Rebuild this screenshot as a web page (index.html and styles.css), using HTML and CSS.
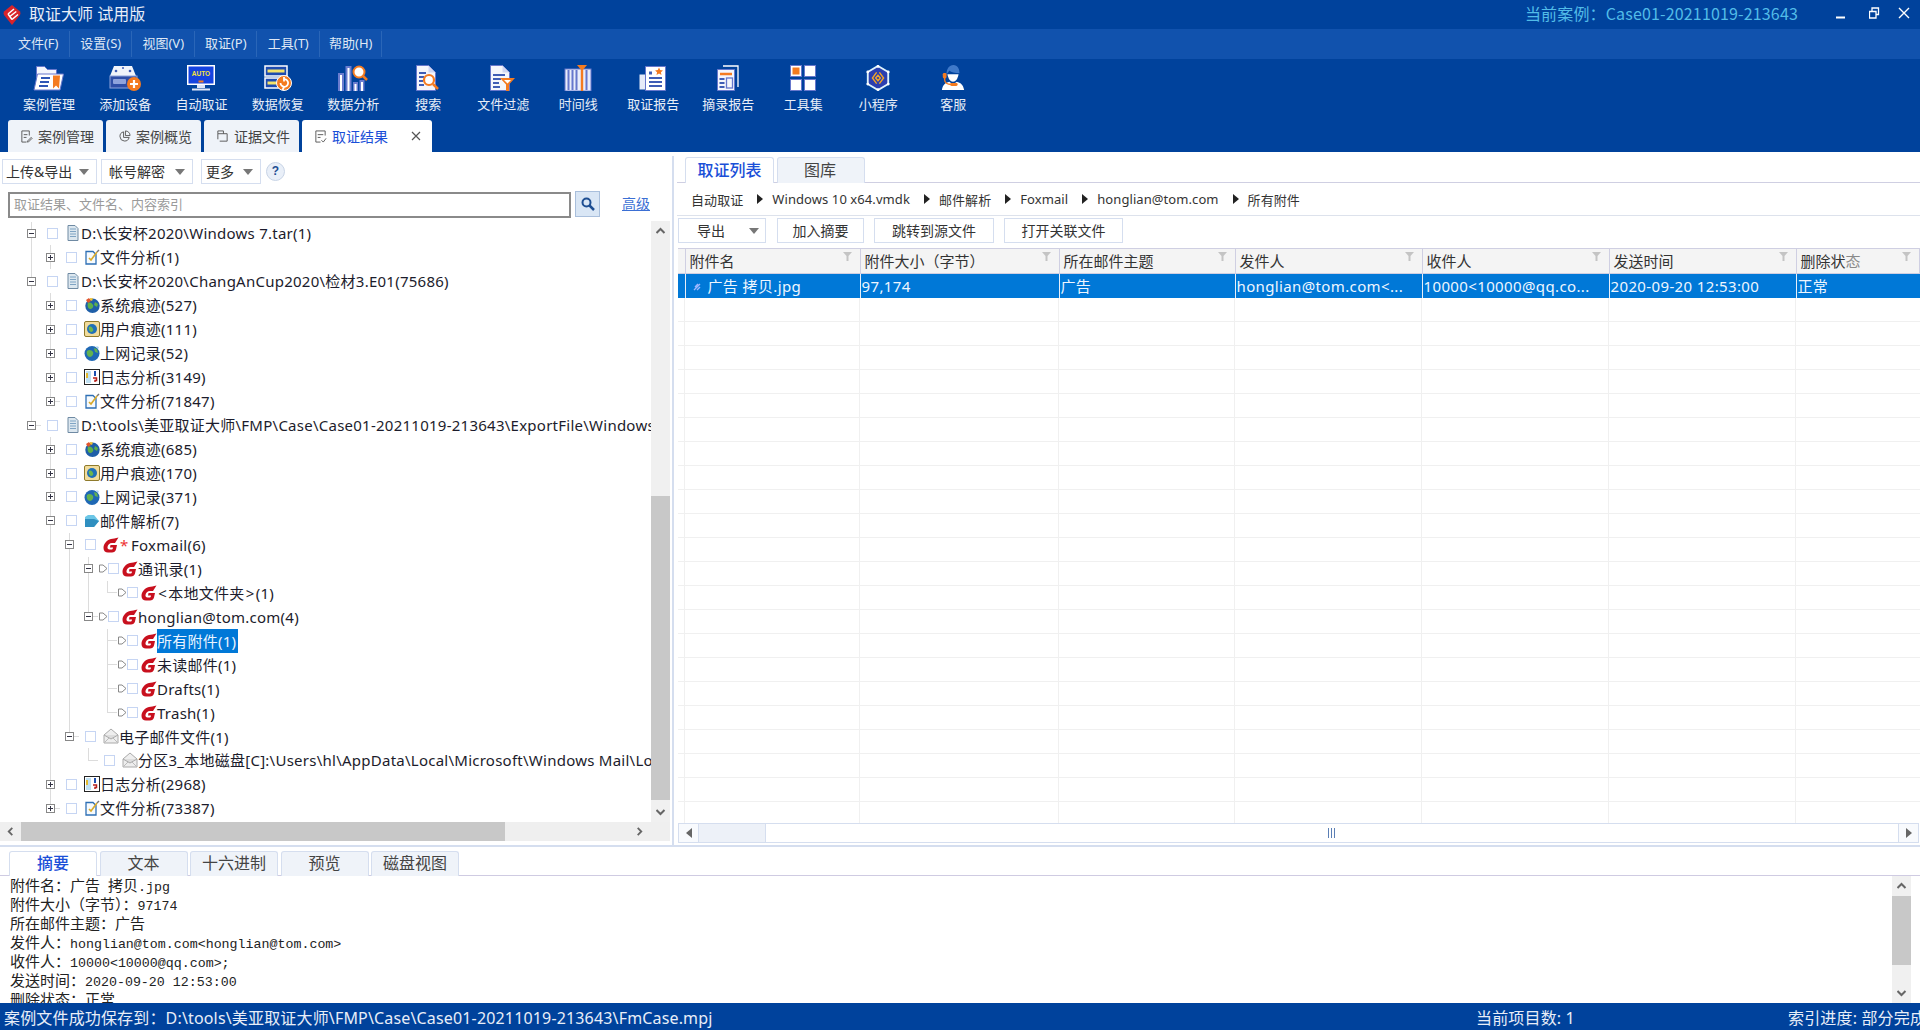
FILE: index.html
```html
<!DOCTYPE html>
<html lang="zh-CN">
<head>
<meta charset="utf-8">
<title>取证大师 试用版</title>
<link rel="stylesheet" href="styles.css">
</head>
<body>
<svg class="defs" aria-hidden="true">
  <symbol id="doc" viewBox="0 0 16 16"><path d="M3 .5h7l3 3v12H3z" fill="#dce7ef" stroke="#6f8aa3"/><path d="M5 4h6M5 6.500h6M5 9h6M5 11.500h6" stroke="#7fa4c4"/></symbol>
  <symbol id="fa" viewBox="0 0 16 16"><path d="M2 2.500h7l3 3v9.500H2z" fill="#f6fafd" stroke="#2d6fb5" stroke-width="1.300"/><path d="M5 9l2 2 6-8" fill="none" stroke="#d8a92a" stroke-width="1.600"/><path d="M13 3l2-2" stroke="#777" stroke-width="1.500"/></symbol>
  <symbol id="sys" viewBox="0 0 16 16"><circle cx="8.500" cy="8.800" r="7.200" fill="#1f5fa8"/><path d="M4 6c2-1 4 0 5 2s-1 4-3 4-3-4-2-6zM11 5l3 2-1 3-3-2z" fill="#5eb04a"/><path d="M2 3l3-2 2 3-3 2z" fill="#e2552b"/><path d="M6 1l3 .500-1 2.500-2-1z" fill="#f2c230"/></symbol>
  <symbol id="usr" viewBox="0 0 16 16"><rect x=".5" y=".5" width="15" height="15" rx="1.500" fill="#f1dc9b" stroke="#8f7a2c"/><circle cx="8" cy="8" r="5" fill="#2070b8"/><path d="M5 6c2-1 3 0 4 2s-1 3-2 3-3-3-2-5z" fill="#6db64d"/></symbol>
  <symbol id="net" viewBox="0 0 16 16"><circle cx="8" cy="8.500" r="7.500" fill="#1f68b4"/><path d="M3 6c2-2 5-1 6 1s-1 5-3 5-4-3-3-6zM10 3l3 1 1 4-3-1z" fill="#63b24f"/><path d="M12 1l3 1-1 2z" fill="#9fd0ef"/></symbol>
  <symbol id="log" viewBox="0 0 16 16"><rect x=".5" y=".5" width="15" height="15" fill="#fff" stroke="#222"/><rect x="2" y="2" width="5" height="12" fill="#bfe0f2"/><path d="M11 2v5" stroke="#1d4fb0" stroke-width="2"/><path d="M3 4v5" stroke="#e3b92f" stroke-width="2"/><path d="M9 9h3.500v2.500H11V13" fill="none" stroke="#b5201c" stroke-width="1.500"/></symbol>
  <symbol id="mail" viewBox="0 0 16 16"><path d="M1 4l3-2h6l5 6-5 6H1z" fill="#6cc6e6"/><path d="M1 6h9l5 2-5 6H1z" fill="#2f8fc0"/></symbol>
  <symbol id="fox" viewBox="0 0 16 16"><path d="M15.500.5C12.500 1.500 10 1.500 8 2 3.500 3 .5 7 .5 11c0 3 2 4.500 4.500 4.500h4c2 0 3.500-1 4-3l1-4.500H7.500L7 10.500h3l-.2 1c-.1.7-.6 1-1.300 1h-2c-1.500 0-2.200-1-2-2.500.3-2 2-4 4.500-4h3z" fill="#c8101e"/></symbol>
  <symbol id="env" viewBox="0 0 16 16"><path d="M1 7l7-6 7 6v8H1z" fill="#eee" stroke="#aaa"/><path d="M1 7l7 4 7-4" fill="#ddd" stroke="#aaa"/><path d="M1 15l5-5M15 15l-5-5" stroke="#bbb"/></symbol>
  <symbol id="tri" viewBox="0 0 9 9"><path d="M.5 1h3.500l4 3.500-4 3.500H.5z" fill="#fff" stroke="#888"/></symbol>
  <symbol id="fun" viewBox="0 0 9 9"><path d="M0 0h9L5.500 4v5h-2V4z" fill="#c4c4c4"/></symbol>
  <symbol id="up" viewBox="0 0 10 10"><path d="M1 7l4-4 4 4" fill="none" stroke="#666" stroke-width="2"/></symbol>
  <symbol id="down" viewBox="0 0 10 10"><path d="M1 3l4 4 4-4" fill="none" stroke="#666" stroke-width="2"/></symbol>
  <symbol id="left" viewBox="0 0 10 10"><path d="M7 1L3 5l4 4" fill="none" stroke="#666" stroke-width="2"/></symbol>
  <symbol id="right" viewBox="0 0 10 10"><path d="M3 1l4 4-4 4" fill="none" stroke="#666" stroke-width="2"/></symbol>
</svg>

<header class="titlebar">
  <svg class="logo" viewBox="0 0 18 20"><path d="M9 0l8 6.500q1 1.500 0 3.500L9 20 1 10Q0 8 1 6.500z" fill="#d8232a"/><path d="M5 9l6-5M6.800 11.500l6.500-5M9 14.500l6-5M5 9l4 5.500" fill="none" stroke="#fff" stroke-width="1.500"/></svg>
  <span class="apptitle">取证大师 试用版</span>
  <span class="casename">当前案例：Case01-20211019-213643</span>
  <svg class="winbtn" viewBox="0 0 33 12"><path d="M0 10.500h9" stroke="#fff" stroke-width="2"/></svg>
  <svg class="winbtn mid" viewBox="0 0 29 12"><path d="M.5 4.500h6.500v6.500H.5zM3 4V1h6.500v6.500H7" fill="none" stroke="#fff" stroke-width="1.300"/></svg>
  <svg class="winbtn last" viewBox="0 0 12 12"><path d="M1 1l10 10M11 1L1 11" stroke="#fff" stroke-width="1.400"/></svg>
</header>

<nav class="menubar">
  <span class="menu">文件(F)</span><span class="menu">设置(S)</span><span class="menu">视图(V)</span><span class="menu">取证(P)</span><span class="menu">工具(T)</span><span class="menu">帮助(H)</span>
</nav>

<section class="toolbar">
  <div class="tool"><svg viewBox="0 0 32 26"><path d="M3.500 13V1.500h8l3 3h9V9" fill="#f4f6fc" stroke="#6677cc"/><path d="M4.500 9h26l-3.500 16H1z" fill="#fff" stroke="#6677cc"/><path d="M8 13h9M7 17h9M6 21h9" stroke="#2f56b5" stroke-width="2"/><path d="M20 10.500h7l-1 13-3-3-3 3z" fill="#f47b20"/></svg><span>案例管理</span></div>
  <div class="tool"><svg viewBox="0 0 32 26"><path d="M5 1h18l4 10H1z" fill="#f1f4fa"/><circle cx="7" cy="6" r="1.300" fill="#3f5db5"/><circle cx="21" cy="6" r="1.300" fill="#3f5db5"/><circle cx="14" cy="3" r="1" fill="#3f5db5"/><rect x="1" y="11" width="27" height="12" fill="#2f4ea6" stroke="#8fa3dc"/><rect x="4" y="14" width="13" height="5" rx="1" fill="#8fa3dc"/><circle cx="25" cy="19" r="7" fill="#f47b20"/><path d="M25 15v8M21 19h8" stroke="#fff" stroke-width="2.200"/></svg><span>添加设备</span></div>
  <div class="tool"><svg viewBox="0 0 28 26"><rect x="0" y="0" width="28" height="20" fill="#fff"/><rect x="1.500" y="1.500" width="25" height="17" fill="#1543e0"/><text x="14" y="11" class="auto">AUTO</text><rect x="11.500" y="15.500" width="5" height="2" fill="#f47b20"/><path d="M10 20h8v3h-8zM5 23.500h18v2H5z" fill="#dfe6f8"/></svg><span>自动取证</span></div>
  <div class="tool"><svg viewBox="0 0 28 26"><rect x="1" y="1" width="22" height="10" fill="#1d4bb0" stroke="#fff" stroke-width="1.500"/><rect x="3.500" y="4.500" width="17" height="3" fill="#f3e36a"/><rect x="1" y="13" width="22" height="10" fill="#1d4bb0" stroke="#fff" stroke-width="1.500"/><rect x="3.500" y="16.500" width="9" height="3" fill="#f3e36a"/><circle cx="20" cy="18" r="7.500" fill="#f47b20" stroke="#fff"/><path d="M16.500 18a3.800 3.800 0 1 0 3.500-3.800M20 12v4.500M20 22l-1.500 3" fill="none" stroke="#fff" stroke-width="1.800"/></svg><span>数据恢复</span></div>
  <div class="tool"><svg viewBox="0 0 30 26"><rect x="0" y="8" width="6" height="18" fill="#6a7ccf"/><rect x="2" y="10" width="2" height="16" fill="#fff"/><rect x="7.500" y="1" width="6" height="25" fill="#6a7ccf"/><rect x="9.500" y="3" width="2" height="23" fill="#fff"/><rect x="15" y="17" width="5" height="9" fill="#6a7ccf"/><rect x="16.500" y="19" width="2" height="7" fill="#fff"/><rect x="21.500" y="15" width="5" height="11" fill="#6a7ccf"/><rect x="23" y="17" width="2" height="9" fill="#fff"/><circle cx="21" cy="7" r="5.500" fill="#fff" stroke="#f47b20" stroke-width="2"/><path d="M25 11l4 4" stroke="#f47b20" stroke-width="2.500"/></svg><span>数据分析</span></div>
  <div class="tool"><svg viewBox="0 0 26 26"><path d="M1.500.5h12l7 7v18h-19z" fill="#f4f6fc" stroke="#6677cc"/><path d="M13.500.5v7h7" fill="#cfd6f2"/><path d="M4 8h7M4 12h5M4 16h4M4 20h5" stroke="#3f5db5" stroke-width="2"/><circle cx="14" cy="15" r="5" fill="#fff" stroke="#f47b20" stroke-width="2.200"/><path d="M18 19l5 5" stroke="#f47b20" stroke-width="2.500"/></svg><span>搜索</span></div>
  <div class="tool"><svg viewBox="0 0 28 26"><path d="M1.500.5h12l7 7v18h-19z" fill="#f4f6fc" stroke="#6677cc"/><path d="M13.500.5v7h7" fill="#cfd6f2"/><path d="M4 10h12M4 14h8M4 18h6M4 22h7" stroke="#3f5db5" stroke-width="2"/><path d="M11 13h15l-6 6.500V26h-3v-6.500z" fill="#f47b20"/><path d="M15 15h7l-3.500 3.500z" fill="#fff"/></svg><span>文件过滤</span></div>
  <div class="tool"><svg viewBox="0 0 26 26"><rect x="0" y="4" width="26" height="22" fill="#e9edfb" stroke="#6677cc"/><path d="M3.500 5v20M7.500 5v20M11.500 5v20M21.500 5v20" stroke="#6677cc" stroke-width="2"/><path d="M17 5v21" stroke="#f47b20" stroke-width="2.400"/><path d="M12 0h10l-5 6z" fill="#f47b20"/></svg><span>时间线</span></div>
  <div class="tool"><svg viewBox="0 0 28 26"><path d="M.5 9.500h6v15h-6z" fill="#e6ebf8"/><path d="M6.500 1.500h20v24h-20z" fill="#fff" stroke="#6677cc"/><path d="M10 6.500h3v3h-3z" fill="#3f5db5"/><path d="M10 13h13M10 17h13M10 21h13" stroke="#3f5db5" stroke-width="2"/><path d="M20 2.500l1.200 2.600 2.800.3-2.100 1.900.6 2.800-2.500-1.500-2.500 1.500.6-2.800-2.100-1.900 2.800-.3z" fill="#f47b20"/></svg><span>取证报告</span></div>
  <div class="tool"><svg viewBox="0 0 24 26"><path d="M7 1h15v21" fill="none" stroke="#fff" stroke-width="1.300"/><path d="M1.500 4.500h17v21h-17z" fill="#f4f6fc" stroke="#6677cc"/><path d="M4 9h12" stroke="#f47b20" stroke-width="2.500"/><path d="M3.500 14h5M3.500 18h5M3.500 22h5" stroke="#3f5db5" stroke-width="2"/><rect x="10.500" y="13" width="6" height="10" fill="none" stroke="#6677cc" stroke-width="1.300"/></svg><span>摘录报告</span></div>
  <div class="tool"><svg viewBox="0 0 26 26"><rect x=".5" y=".5" width="11" height="11" fill="#fff" stroke="#6677cc"/><rect x="2.500" y="2.500" width="7" height="7" fill="#f47b20"/><rect x="14.500" y=".5" width="11" height="11" fill="#fff" stroke="#6677cc"/><rect x=".5" y="14.500" width="11" height="11" fill="#fff" stroke="#6677cc"/><rect x="14.500" y="14.500" width="11" height="11" fill="#fff" stroke="#6677cc"/></svg><span>工具集</span></div>
  <div class="tool"><svg viewBox="0 0 28 28"><path d="M14 1l11 6.500v13L14 27 3 20.500v-13z" fill="#2b3fb0" stroke="#dff3fb" stroke-width="2"/><circle cx="14" cy="1.500" r="1.500" fill="#fff"/><circle cx="25" cy="7.500" r="1.500" fill="#fff"/><circle cx="25" cy="20.500" r="1.500" fill="#fff"/><circle cx="14" cy="26.500" r="1.500" fill="#fff"/><circle cx="3" cy="20.500" r="1.500" fill="#fff"/><circle cx="3" cy="7.500" r="1.500" fill="#fff"/><path d="M12.500 8l-4.500 6 4.500 6M15.500 8l4.500 6-4.500 6M14 11l-2.500 3 2.500 3 2.500-3z" fill="none" stroke="#f5a623" stroke-width="1.500"/></svg><span>小程序</span></div>
  <div class="tool"><svg viewBox="0 0 26 28"><path d="M1 27c1-6 4-8 8-9l4 3 4-3c4 1 7 3 8 9z" fill="#fff"/><path d="M7 10c1 5 3 8 6 8s5-3 6-8z" fill="#fff"/><path d="M6 10C6 4 9 0 13.500 0S20 4 20 9c-5 0-9-1-11-3-1 2-2 3-3 4z" fill="#3f79c9"/><path d="M4 12v4c0 3 3 5 7 5" fill="none" stroke="#f47b20" stroke-width="1.500"/><rect x="2" y="8.500" width="4" height="6" rx="1.500" fill="#f47b20"/><rect x="10" y="19.500" width="8" height="3" rx="1.500" fill="#f47b20"/></svg><span>客服</span></div>
</section>

<div class="doctabs">
  <div class="doctab w1"><svg viewBox="0 0 14 14"><path d="M2 1h8v5M2 1v12h5M4 5h4M4 8h3M8 12l4-4 1 1-4 4H8z" fill="none" stroke="#555"/></svg>案例管理</div>
  <div class="doctab w2"><svg viewBox="0 0 14 14"><path d="M6 2a5 5 0 1 0 6 6H6zM8 1v5h5a5 5 0 0 0-5-5z" fill="none" stroke="#555"/></svg>案例概览</div>
  <div class="doctab w3"><svg viewBox="0 0 14 14"><path d="M2 4V1h6v3M2 4h10v8H4M2 4v6" fill="none" stroke="#555"/></svg>证据文件</div>
  <div class="doctab active"><svg viewBox="0 0 14 14"><path d="M12 6V1H2v12h5M4 5h6M4 8h3M8 11l2 2 3-4" fill="none" stroke="#555"/></svg><span class="dtlabel">取证结果</span><svg class="dtclose" viewBox="0 0 10 10"><path d="M1 1l8 8M9 1l-8 8" stroke="#555" stroke-width="1.200"/></svg></div>
</div>

<main class="main">
  <section class="left">
    <div class="lefttools">
      <div class="ddbtn b1">上传&amp;导出<i class="caret"></i></div>
      <div class="ddbtn b2">帐号解密<i class="caret"></i></div>
      <div class="ddbtn b3">更多<i class="caret"></i></div>
      <div class="help">?</div>
    </div>
    <div class="searchrow">
      <div class="searchbox">取证结果、文件名、内容索引</div>
      <div class="searchbtn"><svg viewBox="0 0 14 14"><circle cx="5.500" cy="5.500" r="4" fill="none" stroke="#1d4e92" stroke-width="2"/><path d="M8.500 8.500l4.500 4.500" stroke="#1d4e92" stroke-width="2.500"/></svg></div>
      <a class="adv">高级</a>
    </div>
    <div class="treewrap">
      <div class="tree">
        <div class="row"><i class="c vh"><b class="box minus"></b></i><i class="chk"></i><svg class="ic"><use href="#doc"/></svg><span>D:\长安杯2020\Windows 7.tar(1)</span></div>
        <div class="row"><i class="c v"></i><i class="c v"><b class="box plus"></b></i><i class="chk"></i><svg class="ic"><use href="#fa"/></svg><span>文件分析(1)</span></div>
        <div class="row"><i class="c vh"><b class="box minus"></b></i><i class="chk"></i><svg class="ic"><use href="#doc"/></svg><span>D:\长安杯2020\ChangAnCup2020\检材3.E01(75686)</span></div>
        <div class="row"><i class="c v"></i><i class="c v"><b class="box plus"></b></i><i class="chk"></i><svg class="ic"><use href="#sys"/></svg><span>系统痕迹(527)</span></div>
        <div class="row"><i class="c v"></i><i class="c v"><b class="box plus"></b></i><i class="chk"></i><svg class="ic"><use href="#usr"/></svg><span>用户痕迹(111)</span></div>
        <div class="row"><i class="c v"></i><i class="c v"><b class="box plus"></b></i><i class="chk"></i><svg class="ic"><use href="#net"/></svg><span>上网记录(52)</span></div>
        <div class="row"><i class="c v"></i><i class="c v"><b class="box plus"></b></i><i class="chk"></i><svg class="ic"><use href="#log"/></svg><span>日志分析(3149)</span></div>
        <div class="row"><i class="c v"></i><i class="c l"><b class="box plus"></b></i><i class="chk"></i><svg class="ic"><use href="#fa"/></svg><span>文件分析(71847)</span></div>
        <div class="row"><i class="c l"><b class="box minus"></b></i><i class="chk"></i><svg class="ic"><use href="#doc"/></svg><span>D:\tools\美亚取证大师\FMP\Case\Case01-20211019-213643\ExportFile\Windows 10 x64.vmdk(75686)</span></div>
        <div class="row"><i class="c"></i><i class="c v"><b class="box plus"></b></i><i class="chk"></i><svg class="ic"><use href="#sys"/></svg><span>系统痕迹(685)</span></div>
        <div class="row"><i class="c"></i><i class="c v"><b class="box plus"></b></i><i class="chk"></i><svg class="ic"><use href="#usr"/></svg><span>用户痕迹(170)</span></div>
        <div class="row"><i class="c"></i><i class="c v"><b class="box plus"></b></i><i class="chk"></i><svg class="ic"><use href="#net"/></svg><span>上网记录(371)</span></div>
        <div class="row"><i class="c"></i><i class="c v"><b class="box minus"></b></i><i class="chk"></i><svg class="ic"><use href="#mail"/></svg><span>邮件解析(7)</span></div>
        <div class="row"><i class="c"></i><i class="c v"></i><i class="c v"><b class="box minus"></b></i><i class="chk"></i><svg class="ic"><use href="#fox"/></svg><em class="star">*</em><span>Foxmail(6)</span></div>
        <div class="row"><i class="c"></i><i class="c v"></i><i class="c v"></i><i class="c v"><b class="box minus"></b></i><svg class="tr"><use href="#tri"/></svg><i class="chk tight"></i><svg class="ic near"><use href="#fox"/></svg><span>通讯录(1)</span></div>
        <div class="row"><i class="c"></i><i class="c v"></i><i class="c v"></i><i class="c v"></i><i class="c l"></i><svg class="tr"><use href="#tri"/></svg><i class="chk tight"></i><svg class="ic near"><use href="#fox"/></svg><span><u class="lt">&lt;</u>本地文件夹<u class="lt">&gt;</u>(1)</span></div>
        <div class="row"><i class="c"></i><i class="c v"></i><i class="c v"></i><i class="c l"><b class="box minus"></b></i><svg class="tr"><use href="#tri"/></svg><i class="chk tight"></i><svg class="ic near"><use href="#fox"/></svg><span>honglian@tom.com(4)</span></div>
        <div class="row"><i class="c"></i><i class="c v"></i><i class="c v"></i><i class="c"></i><i class="c t"></i><svg class="tr"><use href="#tri"/></svg><i class="chk tight"></i><svg class="ic near"><use href="#fox"/></svg><span class="sel">所有附件(1)</span></div>
        <div class="row"><i class="c"></i><i class="c v"></i><i class="c v"></i><i class="c"></i><i class="c t"></i><svg class="tr"><use href="#tri"/></svg><i class="chk tight"></i><svg class="ic near"><use href="#fox"/></svg><span>未读邮件(1)</span></div>
        <div class="row"><i class="c"></i><i class="c v"></i><i class="c v"></i><i class="c"></i><i class="c t"></i><svg class="tr"><use href="#tri"/></svg><i class="chk tight"></i><svg class="ic near"><use href="#fox"/></svg><span>Drafts(1)</span></div>
        <div class="row"><i class="c"></i><i class="c v"></i><i class="c v"></i><i class="c"></i><i class="c l"></i><svg class="tr"><use href="#tri"/></svg><i class="chk tight"></i><svg class="ic near"><use href="#fox"/></svg><span>Trash(1)</span></div>
        <div class="row"><i class="c"></i><i class="c v"></i><i class="c l"><b class="box minus"></b></i><i class="chk"></i><svg class="ic"><use href="#env"/></svg><span>电子邮件文件(1)</span></div>
        <div class="row"><i class="c"></i><i class="c v"></i><i class="c"></i><i class="c l"></i><i class="chk"></i><svg class="ic"><use href="#env"/></svg><span>分区3_本地磁盘[C]:\Users\hl\AppData\Local\Microsoft\Windows Mail\Local Folders(1)</span></div>
        <div class="row"><i class="c"></i><i class="c v"><b class="box plus"></b></i><i class="chk"></i><svg class="ic"><use href="#log"/></svg><span>日志分析(2968)</span></div>
        <div class="row"><i class="c"></i><i class="c l"><b class="box plus"></b></i><i class="chk"></i><svg class="ic"><use href="#fa"/></svg><span>文件分析(73387)</span></div>
      </div>
      <div class="vscroll">
        <svg class="sbarrow"><use href="#up"/></svg>
        <div class="vtrack"><div class="vthumb"></div></div>
        <svg class="sbarrow"><use href="#down"/></svg>
      </div>
    </div>
    <div class="hscroll">
      <svg class="sbarrow"><use href="#left"/></svg>
      <div class="hthumb"></div>
      <svg class="sbarrow end"><use href="#right"/></svg>
    </div>
  </section>

  <div class="vsplit"></div>

  <section class="right">
    <div class="rtabs">
      <div class="rtab on">取证列表</div>
      <div class="rtab">图库</div>
    </div>
    <div class="crumbs">
      <span>自动取证</span><i class="sep"></i><span>Windows 10 x64.vmdk</span><i class="sep"></i><span>邮件解析</span><i class="sep"></i><span>Foxmail</span><i class="sep"></i><span>honglian@tom.com</span><i class="sep"></i><span>所有附件</span>
    </div>
    <div class="actions">
      <div class="act a1">导出<i class="caret"></i></div>
      <div class="act a2">加入摘要</div>
      <div class="act a3">跳转到源文件</div>
      <div class="act a4">打开关联文件</div>
    </div>
    <div class="grid">
      <table class="tbl">
        <colgroup><col class="k0"><col class="k1"><col class="k2"><col class="k3"><col class="k4"><col class="k4"><col class="k4"><col></colgroup>
        <thead>
          <tr><th></th>
            <th><span>附件名</span><svg class="fn"><use href="#fun"/></svg></th>
            <th><span>附件大小（字节）</span><svg class="fn"><use href="#fun"/></svg></th>
            <th><span>所在邮件主题</span><svg class="fn"><use href="#fun"/></svg></th>
            <th><span>发件人</span><svg class="fn"><use href="#fun"/></svg></th>
            <th><span>收件人</span><svg class="fn"><use href="#fun"/></svg></th>
            <th><span>发送时间</span><svg class="fn"><use href="#fun"/></svg></th>
            <th><span>删除状<u class="faint">态</u></span><svg class="fn"><use href="#fun"/></svg></th>
          </tr>
        </thead>
        <tbody>
          <tr><td></td>
            <td><svg class="clip" viewBox="0 0 10 10"><path d="M2 8l6-6M3 5l3-3M5 8l3-3" stroke="#9db7ff" stroke-width="1.400"/></svg>广告 拷贝.jpg</td>
            <td>97,174</td><td>广告</td><td>honglian@tom.com&lt;...</td><td>10000&lt;10000@qq.co...</td><td>2020-09-20 12:53:00</td><td>正常</td>
          </tr>
        </tbody>
      </table>
      <div class="filler"></div>
    </div>
    <div class="rhscroll">
      <div class="rbtn"><svg viewBox="0 0 6 10"><path d="M6 0v10L0 5z" fill="#666"/></svg></div>
      <div class="rthumb"></div>
      <div class="rtrack"><i class="grip"></i></div>
      <div class="rbtn"><svg viewBox="0 0 6 10"><path d="M0 0v10l6-5z" fill="#666"/></svg></div>
    </div>
  </section>
</main>

<section class="bottom">
  <div class="btabs">
    <div class="btab on">摘要</div><div class="btab">文本</div><div class="btab">十六进制</div><div class="btab">预览</div><div class="btab">磁盘视图</div>
  </div>
  <div class="bbody">
    <div class="summary">
      <p>附件名：广告<tt> </tt>拷贝<tt>.jpg</tt></p>
      <p>附件大小（字节）：<tt>97174</tt></p>
      <p>所在邮件主题：广告</p>
      <p>发件人：<tt>honglian@tom.com&lt;honglian@tom.com&gt;</tt></p>
      <p>收件人：<tt>10000&lt;10000@qq.com&gt;;</tt></p>
      <p>发送时间：<tt>2020-09-20 12:53:00</tt></p>
      <p>删除状态：正常</p>
    </div>
    <div class="bscroll">
      <svg class="sbarrow"><use href="#up"/></svg>
      <div class="bthumb"></div>
      <div class="bgap"></div>
      <svg class="sbarrow"><use href="#down"/></svg>
    </div>
  </div>
</section>

<footer class="status">
  <span>案例文件成功保存到：D:\tools\美亚取证大师\FMP\Case\Case01-20211019-213643\FmCase.mpj</span>
  <span>当前项目数: 1</span>
  <span>索引进度: 部分完成</span>
</footer>
</body>
</html>
```
FILE: styles.css
```css
* { box-sizing: border-box; }
html, body { margin: 0; padding: 0; }
body {
  width: 1920px; height: 1030px; overflow: hidden;
  display: flex; flex-direction: column;
  font-family: "Noto Sans", "Noto Sans CJK SC", sans-serif;
  font-size: 15px; color: #222; background: #fff;
}
.defs { width: 0; height: 0; display: block; position: absolute; }
i, u, em, b { font-style: normal; text-decoration: none; font-weight: normal; }

.titlebar { height: 29px; background: #00429c; display: flex; align-items: center; padding-bottom: 3px; flex: none; }
.logo { width: 18px; height: 20px; margin: 3px 0 0 3px; }
.apptitle { color: #e8eef8; font-size: 16px; margin-left: 8px; }
.casename { color: #52bce8; font-size: 16px; letter-spacing: .16px; margin-left: auto; margin-right: 38px; font-family: "Noto Sans CJK SC", sans-serif; }
.winbtn { width: 33px; height: 12px; flex: none; }
.winbtn.mid { width: 29px; }
.winbtn.last { width: 12px; margin-right: 10px; }

.menubar { height: 30px; background: #1152ad; display: flex; align-items: center; padding-left: 7px; flex: none; }
.menu { width: 62.5px; height: 26px; line-height: 25px; padding-left: 1px; text-align: center; color: #dfe8f5; font-size: 13px; border-right: 1px solid #2a66b8; }

.toolbar { height: 61px; background: #00429c; display: flex; padding: 6px 0 0 11px; flex: none; }
.tool { width: 75px; display: flex; flex-direction: column; align-items: center; color: #e8eef8; font-size: 13px; }
.tool:nth-child(-n+4) { width: 76.200px; }
.tool svg { height: 26px; width: 32px; }
.tool span { margin-top: 2px; line-height: 22px; }
.auto { font: bold 6.500px "Liberation Sans", sans-serif; fill: #f5e23a; text-anchor: middle; }

.doctabs { height: 32px; background: #00429c; display: flex; padding-left: 8px; gap: 3px; flex: none; }
.doctab { height: 32px; background: #eff3f9; border-radius: 3px 3px 0 0; display: flex; align-items: center; font-size: 14px; color: #444; padding-left: 12px; }
.doctab svg { width: 13px; height: 13px; margin-right: 5px; flex: none; }
.doctab.w1, .doctab.w2, .doctab.w3 { width: 95px; }
.doctab.active { width: 130px; background: #fff; color: #1a4fd8; }
.doctab .dtclose { width: 10px; height: 10px; margin: 0 0 0 23px; }

.main { height: 693px; display: flex; flex: none; }
.left { width: 672px; display: flex; flex-direction: column; flex: none; }
.lefttools { display: flex; align-items: center; height: 25px; margin: 7px 0 0 2px; font-size: 14px; flex: none; }
.ddbtn { height: 25px; border: 1px solid #d5deef; display: flex; align-items: center; padding: 0 0 2px 3px; color: #333; }
.ddbtn.b1 { width: 95px; }
.ddbtn.b2 { width: 92px; margin-left: 4px; padding-left: 7px; }
.ddbtn.b3 { width: 60px; margin-left: 8px; padding-left: 4px; }
.caret { width: 0; height: 0; border-left: 5.500px solid transparent; border-right: 5.500px solid transparent; border-top: 6px solid #777; margin: 2px 7px 0 auto; }
.help { width: 19px; height: 19px; border-radius: 50%; background: #e9eff8; border: 1px solid #c8d4e6; margin-left: 5px; text-align: center; font: bold 12px/17px "Liberation Sans", sans-serif; color: #1d4e92; }

.searchrow { display: flex; align-items: flex-start; margin: 7px 0 0 8px; height: 27px; flex: none; }
.searchbox { width: 563px; height: 26px; border: 2px solid #8a8a8a; color: #9a9a9a; font-size: 13px; line-height: 20px; padding-left: 4px; margin-top: 1px; }
.searchbtn { width: 25px; height: 26px; margin-left: 4px; background: #d9e6f5; border: 1px solid #a9bfdc; display: flex; align-items: center; justify-content: center; }
.searchbtn svg { width: 14px; height: 14px; }
.adv { margin: 2px 0 0 22px; color: #3b6fd4; text-decoration: underline; font-size: 14px; }

.treewrap { height: 601px; display: flex; margin-top: 3px; flex: none; }
.tree { width: 651px; height: 601px; padding-top: .5px; overflow: hidden; flex: none; }
.row { height: 23.960px; display: flex; align-items: center; white-space: nowrap; padding-left: 22px; line-height: 24px; font-size: 15px; letter-spacing: .25px; color: #1c1c2c; }
.c { width: 19px; height: 100%; flex: none; display: flex; align-items: center; justify-content: center;
  --g: linear-gradient(#dcdcdc, #dcdcdc); }
.v { background: var(--g) center / 1px 100% no-repeat; }
.vh { background: var(--g) center / 1px 100% no-repeat; }
.t { background: var(--g) center / 1px 100% no-repeat, var(--g) right center / 10px 1px no-repeat; }
.l { background: var(--g) center top / 1px 50% no-repeat, var(--g) right center / 10px 1px no-repeat; }
.box { width: 9px; height: 9px; border: 1px solid #888; display: block; --k: linear-gradient(#334, #334); }
.plus { background: var(--k) center / 5px 1px no-repeat, var(--k) center / 1px 5px no-repeat, #fff; }
.minus { background: var(--k) center / 5px 1px no-repeat, #fff; }
.chk { width: 11px; height: 11px; border: 1px solid #c6d5f3; background: #fff; margin-left: 6px; flex: none; }
.chk.tight { margin-left: 0; }
.ic { width: 16px; height: 16px; margin-left: 7px; flex: none; }
.ic.near { margin-left: 3px; }
.tr { width: 9px; height: 9px; margin-left: 1px; flex: none; }
.star { color: #e33; margin: 0 6px 0 1px; width: 5px; font-size: 15px; }
.lt { padding: 0 1.200px; }
.sel { background: #0078d7; color: #eaf4ff; display: block; height: 24px; padding-right: 2px; }

.vscroll { width: 19px; background: #f0f0f0; display: flex; flex-direction: column; flex: none; }
.sbarrow { width: 19px; height: 20px; padding: 5px 4.500px; flex: none; }
.vtrack { flex: 1; }
.vthumb { height: 304px; margin-top: 255px; background: #c8c8c8; }
.hscroll { height: 19px; width: 670px; background: #efefef; display: flex; align-items: center; flex: none; }
.hscroll .sbarrow { width: 21px; height: 19px; }
.hscroll .end { margin-left: auto; margin-right: 20px; }
.hthumb { width: 484px; height: 19px; background: #c8c8c8; }

.vsplit { width: 5px; flex: none; background: linear-gradient(#d5deef, #d5deef) left / 2px 100% no-repeat; margin-top: 4px; }

.right { flex: 1; min-width: 0; display: flex; flex-direction: column; padding-top: 5px; }
.rtabs { height: 26px; display: flex; gap: 3px; padding-left: 8px; border-bottom: 1px solid #cfcfe2; flex: none; }
.rtab { width: 88px; height: 26px; background: #eff3f9; border: 1px solid #d5deef; border-bottom: 0; border-radius: 3px 3px 0 0; padding-right: 2px; text-align: center; font-size: 16px; line-height: 24px; color: #444; }
.rtab.on { width: 89px; padding-right: 0; background: #fff; color: #1a4fd8; font-weight: 500; }
.crumbs { height: 33px; border-bottom: 1px solid #dde2ec; display: flex; align-items: center; padding-left: 14px; font-size: 13px; letter-spacing: .08px; color: #333; flex: none; }
.sep { width: 0; height: 0; border-top: 5px solid transparent; border-bottom: 5px solid transparent; border-left: 6px solid #222; margin: 0 9px 0 14px; }
.actions { display: flex; height: 25px; margin: 2px 0 0 1px; font-size: 14px; color: #333; flex: none; }
.act { height: 25px; border: 1px solid #d5deef; display: flex; align-items: center; justify-content: center; padding-bottom: 2px; }
.act.a1 { width: 88px; justify-content: flex-start; padding-left: 18px; }
.act.a1 .caret { margin-right: 6px; }
.act.a2 { width: 87px; margin-left: 11px; }
.act.a3 { width: 120px; margin-left: 10px; }
.act.a4 { width: 119px; margin-left: 10px; }

.grid { height: 575px; margin: 5px 0 0 1px; overflow: hidden; flex: none; }
.tbl { width: 1242px; table-layout: fixed; border-collapse: collapse; }
.k0 { width: 7px; } .k1 { width: 175px; } .k2 { width: 199px; } .k3 { width: 176px; } .k4 { width: 187px; }
.tbl th { height: 25px; background: #f4f4f4; border-top: 1px solid #cfcfe2; border-bottom: 1px solid #cfcfe2; border-right: 1px solid #cfcfe2; font-weight: normal; font-size: 15px; line-height: 20px; text-align: left; padding: 0 8px 2px 4px; color: #333; white-space: nowrap; overflow: hidden; }
.tbl th > span { display: inline-block; vertical-align: middle; width: calc(100% - 9px); }
.fn { width: 9px; height: 9px; vertical-align: 4px; }
.faint { opacity: .55; }
.tbl td { height: 24px; background: #0078d7; color: #eef6ff; font-size: 15px; letter-spacing: .37px; padding: 0 0 0 1px; border-right: 1px solid #e8eef8; white-space: nowrap; overflow: hidden; line-height: 22px; }
.tbl td:last-child { border-right: 0; }
.clip { width: 10px; height: 10px; margin: 0 6px 0 5px; }
.filler { height: 525px;
  --s: linear-gradient(#f0f0f0, #f0f0f0);
  background:
    var(--s) 6px 0 / 1px 100% no-repeat,
    var(--s) 181px 0 / 1px 100% no-repeat,
    var(--s) 380px 0 / 1px 100% no-repeat,
    var(--s) 556px 0 / 1px 100% no-repeat,
    var(--s) 743px 0 / 1px 100% no-repeat,
    var(--s) 930px 0 / 1px 100% no-repeat,
    var(--s) 1117px 0 / 1px 100% no-repeat,
    repeating-linear-gradient(#fff 0, #fff 23px, #f0f0f0 23px, #f0f0f0 24px);
}
.rhscroll { height: 20px; margin: 0 1px 0 1px; border: 1px solid #d5deef; display: flex; flex: none; }
.rbtn { width: 20px; display: flex; align-items: center; justify-content: center; background: #f8fafd; border-right: 1px solid #d5deef; flex: none; }
.rbtn:last-child { border-right: 0; border-left: 1px solid #d5deef; }
.rbtn svg { width: 6px; height: 10px; }
.rthumb { width: 67px; background: #edf1f8; border-right: 1px solid #d5deef; flex: none; }
.rtrack { flex: 1; display: flex; align-items: center; padding-left: 562px; }
.grip { width: 7px; height: 10px; background: repeating-linear-gradient(90deg, #5b7fb5 0, #5b7fb5 1px, transparent 1px, transparent 3px); }

.bottom { height: 158px; border-top: 2px solid #d5deef; display: flex; flex-direction: column; flex: none; }
.btabs { height: 29px; padding: 4px 0 0 9px; display: flex; gap: 2.500px; border-bottom: 1px solid #cfcbe2; flex: none; }
.btab { width: 88px; height: 25px; background: #eff3f9; border: 1px solid #d5deef; border-bottom: 0; border-radius: 3px 3px 0 0; text-align: center; font-size: 16px; line-height: 23px; color: #444; }
.btab.on { background: #fff; color: #1a4fd8; font-weight: 500; }
.bbody { flex: 1; display: flex; min-height: 0; }
.summary { flex: 1; padding: 0 0 0 10px; margin-top: -1px; overflow: hidden; font-family: "Noto Sans CJK SC", sans-serif; font-size: 15px; color: #222; }
.summary p { margin: 0; height: 19px; line-height: 19px; white-space: pre; }
.summary tt { font-family: "Liberation Mono", monospace; font-size: 13.300px; }
.bscroll { width: 19px; margin-right: 9px; background: #f0f0f0; display: flex; flex-direction: column; flex: none; }
.bthumb { height: 69px; background: #c8c8c8; flex: none; }
.bgap { flex: 1; }

.status { height: 27px; background: #00429c; color: #e8eef8; font-size: 16px; letter-spacing: .16px; display: grid; grid-template-columns: 1476px 312px 1fr; align-items: center; flex: none; white-space: nowrap; overflow: hidden; }
.status span:first-child { padding-left: 4px; }
```
